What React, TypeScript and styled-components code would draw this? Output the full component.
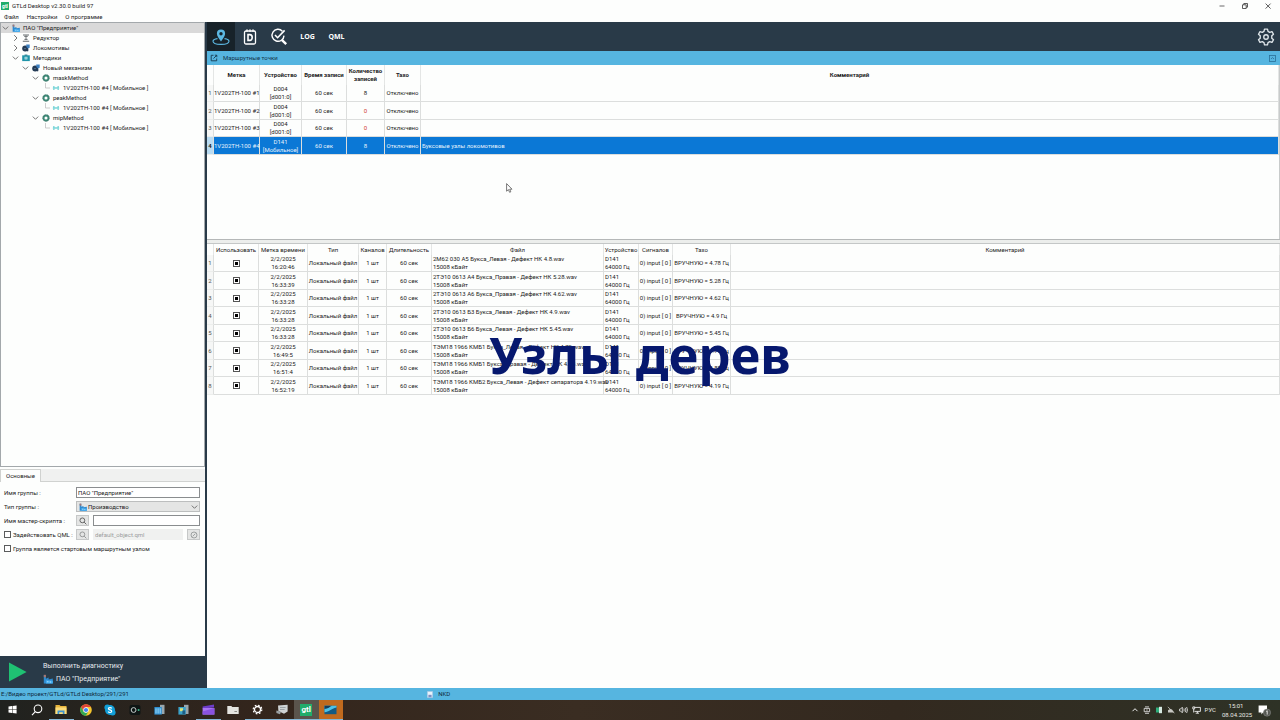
import React from "react";
import styled, { createGlobalStyle, css } from "styled-components";

const Global = createGlobalStyle`
  * { box-sizing: border-box; }
  html, body { margin: 0; height: 100%; }
  #root { height: 100%; }
  body, button, input, select {
    font-family: Roboto, "Open Sans", sans-serif;
    font-size: 6px;
    line-height: 8px;
    color: #1c1c1c;
  }
  button { border: 0; padding: 0; background: none; display: flex; align-items: center; justify-content: center; }
  svg { display: block; flex: none; }
`;

const Window = styled.div`
  display: flex;
  flex-direction: column;
  min-height: 100vh;
  background: #fdfefd;
  overflow: hidden;
`;

const TitleBar = styled.header`
  display: flex;
  align-items: center;
  gap: 3px;
  height: 12px;
  padding: 0 8px 0 1px;
`;
const AppBadge = styled.span<{ $size: number }>`
  display: flex;
  align-items: center;
  justify-content: center;
  width: ${(p) => p.$size}px;
  height: ${(p) => p.$size}px;
  background: #21ad6b;
  color: #fff;
  font-weight: 700;
  font-size: ${(p) => (p.$size > 8 ? 8 : 5)}px;
`;
const Title = styled.h1`
  flex: 1;
  margin: 0;
  font-size: 6px;
  font-weight: 400;
`;
const WindowButtons = styled.div`
  display: flex;
  gap: 15px;
`;
const MenuBar = styled.nav`
  display: flex;
  gap: 8px;
  height: 10px;
  padding: 0 4px;
  align-items: center;
`;

const Main = styled.div`
  flex: 1;
  display: flex;
  min-height: 0;
`;
const Side = styled.aside`
  display: flex;
  flex-direction: column;
  width: 205px;
  flex: none;
`;
const Tree = styled.ul`
  flex: 1;
  margin: 0;
  padding: 0;
  list-style: none;
  border: 1px solid #a3a8ab;
`;
const TreeRow = styled.li<{ $depth: number; $selected?: boolean }>`
  display: flex;
  align-items: center;
  height: 10px;
  padding-left: ${(p) => p.$depth * 10}px;
  background: ${(p) => (p.$selected ? "#d9d9d9" : "transparent")};
  white-space: nowrap;
`;
const TreeIcon = styled.span`
  display: flex;
  width: 13px;
  padding-left: 2px;
`;

const TabStrip = styled.div`
  display: flex;
  margin-top: 2px;
  height: 13px;
  background: #f0f1f0;
  border-bottom: 1px solid #d0d2d0;
`;
const Tab = styled.button`
  width: 41px;
  height: 13px;
  background: #fdfefd;
  border: 1px solid #d0d2d0;
  border-bottom: 0;
`;
const Form = styled.form`
  display: flex;
  flex-direction: column;
  gap: 3px;
  height: 174px;
  padding: 5px 5px 0 4px;
`;
const Field = styled.div`
  display: flex;
  align-items: center;
  height: 11px;
  gap: 4px;
`;
const FieldLabel = styled.label`
  width: 68px;
  white-space: nowrap;
`;
const CheckLabel = styled.label`
  display: flex;
  align-items: center;
  gap: 2px;
  width: 68px;
  white-space: nowrap;
`;
const TextInput = styled.input`
  flex: 1;
  min-width: 0;
  height: 11px;
  padding: 0 1px;
  border: 1px solid #8a8d8f;
  background: #fff;
  &:disabled {
    border-color: #f0f1f0;
    background: #f0f1f0;
    color: #9a9c9c;
  }
`;
const SelectBox = styled.div`
  flex: 1;
  display: flex;
  align-items: center;
  gap: 1px;
  height: 11px;
  padding: 0 0 0 2px;
  border: 1px solid #bcbebe;
  background: #e4e5e4;
`;
const Select = styled.select`
  flex: 1;
  appearance: none;
  border: 0;
  padding: 0;
  background: transparent;
`;
const ToolButton = styled.button`
  width: 13px;
  height: 11px;
  flex: none;
  border: 1px solid #c6c8c8;
  background: #e4e5e4;
`;
const Check = styled.input`
  appearance: none;
  width: 7px;
  height: 7px;
  margin: 0;
  flex: none;
  border: 1px solid #5a5c5c;
  background: #fff;
`;

const RunPanel = styled.button`
  height: 32px;
  justify-content: flex-start;
  gap: 16px;
  padding-left: 9px;
  background: #293a48;
  color: #e6ebee;
  font-size: 7px;
  text-align: left;
`;
const RunText = styled.span`
  display: flex;
  flex-direction: column;
  gap: 4px;
  padding-top: 1px;
`;
const RunTarget = styled.span`
  display: flex;
  align-items: center;
  gap: 3px;
`;

const Content = styled.main`
  flex: 1;
  display: flex;
  flex-direction: column;
  min-width: 0;
  border-left: 2px solid #293a48;
`;
const Toolbar = styled.div`
  display: flex;
  align-items: center;
  height: 29px;
  background: #293a48;
`;
const ToolbarButton = styled.button<{ $active?: boolean }>`
  width: ${(p) => (p.$active ? 28 : 29)}px;
  height: 29px;
  background: ${(p) => (p.$active ? "#172229" : "transparent")};
  color: #fff;
  font-family: "Open Sans", sans-serif;
  font-weight: 700;
  font-size: 7px;
`;
const Spacer = styled.span`
  flex: 1;
`;
const PanelHeader = styled.div`
  display: flex;
  align-items: center;
  gap: 5px;
  height: 14px;
  padding: 0 4px 0 3px;
  background: #56b5e0;
  color: #14344a;
`;
const PanelTitle = styled.h2`
  flex: 1;
  margin: 0;
  font-size: 6px;
  font-weight: 400;
`;
const RoutePane = styled.section`
  height: 174px;
  flex: none;
  border-right: 1px solid #c8cbcb;
`;
const Splitter = styled.hr`
  margin: 0;
  height: 5px;
  border: 0;
  border-top: 1px solid #b5b8b8;
  border-bottom: 1px solid #c4c7c7;
  background: #eceeec;
`;
const RecordPane = styled.section`
  flex: 1;
`;

const Table = styled.table`
  width: 100%;
  table-layout: fixed;
  border-collapse: separate;
  border-spacing: 0;
`;
const HeadCell = styled.th<{ $bold?: boolean }>`
  height: ${(p) => (p.$bold ? 20 : 11)}px;
  padding: 0;
  font-weight: ${(p) => (p.$bold ? 700 : 400)};
  border-right: 1px solid #e4e6e5;
  white-space: pre;
`;
const cell = css`
  padding: 0;
  border-right: 1px solid #dcdedd;
  border-bottom: 1px solid #dcdedd;
  white-space: pre;
`;
const Cell = styled.td<{ $left?: boolean; $red?: boolean }>`
  ${cell}
  text-align: ${(p) => (p.$left ? "left" : "center")};
  padding-left: ${(p) => (p.$left ? 1 : 0)}px;
  color: ${(p) => (p.$red ? "#d23b32" : "inherit")};
`;
const RowHead = styled.th<{ $selected?: boolean }>`
  ${cell}
  border-bottom-color: #eceeec;
  font-weight: ${(p) => (p.$selected ? 700 : 400)};
  background: ${(p) => (p.$selected ? "#b9dcf3" : "#f6f7f6")};
  color: ${(p) => (p.$selected ? "#1c1c1c" : "#555")};
`;
const Row = styled.tr<{ $selected?: boolean }>`
  height: 17px;
  &:nth-child(even) {
    height: 18px;
  }
  background: ${(p) => (p.$selected ? "#0b78d6" : "transparent")};
  color: ${(p) => (p.$selected ? "#e6f2fc" : "inherit")};
`;
const UseCheck = styled.input`
  appearance: none;
  display: block;
  width: 7px;
  height: 7px;
  margin: 0 auto;
  border: 1px solid #555;
  background: #fff;
  &:checked {
    background: #000;
    box-shadow: inset 0 0 0 1px #fff;
  }
`;

const Caption = styled.div`
  position: absolute;
  top: 319px;
  left: 0;
  right: 0;
  text-align: center;
  font-family: "Noto Sans", "Open Sans", sans-serif;
  font-size: 51px;
  line-height: 70px;
  font-weight: 700;
  color: #06186e;
  pointer-events: none;
`;
const Pointer = styled.span`
  position: absolute;
  top: 183px;
  left: 506px;
`;

const StatusBar = styled.footer`
  display: grid;
  grid-template-columns: 1fr 2fr;
  align-items: center;
  height: 12px;
  padding-left: 1px;
  background: #56b5e0;
  color: #10283a;
`;
const StatusUser = styled.span`
  display: flex;
  align-items: center;
  gap: 5px;
`;
const Taskbar = styled.div`
  display: flex;
  align-items: center;
  justify-content: space-between;
  height: 20px;
  background: linear-gradient(90deg, #20221f 0%, #33251c 20%, #3a2d22 45%, #33291f 70%, #2e3226 100%);
  color: #fff;
`;
const Apps = styled.div`
  display: grid;
  grid-template-columns: repeat(14, 1fr);
  width: 343px;
`;
const AppButton = styled.button<{ $open?: boolean; $bg?: string }>`
  height: 20px;
  background: ${(p) => p.$bg || "transparent"};
  border-bottom: 1px solid ${(p) => (p.$open ? "#86b8d8" : "transparent")};
`;
const Tray = styled.div`
  display: flex;
  align-items: center;
  gap: 4px;
  padding-right: 9px;
  color: #e8e8e4;
`;
const Clock = styled.time`
  width: 28px;
  margin: 0 4px 0 2px;
  text-align: center;
  line-height: 9px;
`;

const Chevron = ({ open }: { open: boolean }) => (
  <svg width="9" height="8" viewBox="0 0 9 8" fill="none" stroke="#666" strokeWidth="0.9">
    <path d={open ? "M1.8 2.6 4.5 5.3 7.2 2.6" : "M3.2 1.2 6 4 3.2 6.8"} />
  </svg>
);
const Branch = () => (
  <svg width="9" height="10" viewBox="0 0 9 10" fill="none" stroke="#b8b8b8" strokeWidth="0.7">
    <path d="M4.5 0V5H9" />
  </svg>
);
const Factory = ({ size = 8 }: { size?: number }) => (
  <svg width={size} height={size} viewBox="0 0 10 10">
    <path d="M.8 9.600V1H2.900V4.800L5.600 3.600V5.400L9.800 4.600V9.600Z" fill="#2f8bd0" />
    <path d="M.8.8H2.900V3.200H.8Z" fill="#a9756e" />
    <path d="M2.900 9.600V6.200L9.800 6.800V9.600Z" fill="#45aef0" />
    <path d="M4.300 7.200h1v1.100h-1ZM6.800 7.400h1v1h-1Z" fill="#d6effc" />
  </svg>
);
const Reducer = () => (
  <svg width="8" height="8" viewBox="0 0 8 8" fill="none" stroke="#666b6e">
    <path d="M1 1h6M.8 7.200h6.400" strokeWidth="1.1" />
    <path d="M2.200 2.400h3.600M4 1.500V6M2.400 5.400h3.200" strokeWidth=".9" />
  </svg>
);
const Loco = () => (
  <svg width="8" height="8" viewBox="0 0 8 8">
    <circle cx="3.200" cy="4.500" r="3" fill="#243b55" />
    <circle cx="3" cy="4.600" r=".7" fill="#7d94ac" />
    <path d="M4.200.4h3.500v3.400L6 4.600 4.400 3Z" fill="#3c7fc0" />
    <path d="M4 6.800 6.800 5.200 6 7.600Z" fill="#243b55" />
  </svg>
);
const Book = () => (
  <svg width="8" height="8" viewBox="0 0 8 8">
    <path d="M.2 1.300h7.600v5.800H.2Z" fill="#1f94a8" />
    <path d="M2.600.6h2.800v1H2.600Z" fill="#166c80" />
    <path d="M2.600 2.800h2.800v2.600H2.600Z" fill="#c8f0f4" />
    <path d="M3.500 3.600h1v1h-1Z" fill="#166c80" />
  </svg>
);
const Ring = () => (
  <svg width="8" height="8" viewBox="0 0 8 8">
    <circle cx="4" cy="4" r="2.5" fill="none" stroke="#3f8a78" strokeWidth="1.9" />
    <circle cx="4" cy="4" r="3.300" fill="none" stroke="#3a6a60" strokeWidth=".6" strokeDasharray="1 .8" />
  </svg>
);
const Sensor = () => (
  <svg width="8" height="8" viewBox="0 0 8 8">
    <path d="M1 2.200h1.600v1h2.800v-1h1.600v3.600H5.400v-1H2.600v1H1Z" fill="#6ccfd2" />
    <path d="M.6 3.700h6.800v.8H.6Z" fill="#a8e6e8" />
  </svg>
);
const Magnifier = ({ color = "#555", size = 8 }: { color?: string; size?: number }) => (
  <svg width={size} height={size} viewBox="0 0 10 10" fill="none" stroke={color} strokeWidth="1.1">
    <circle cx="4.200" cy="4.200" r="3" />
    <path d="M6.400 6.400 9.200 9.200" />
  </svg>
);
const Save = () => (
  <svg width="6" height="7" viewBox="0 0 6 7">
    <path d="M.4.5h5.200v6H.4Z" fill="#e9f3fb" stroke="#a9c4e4" strokeWidth=".6" />
    <path d="M1.400 3.800h3.200v2.400H1.400Z" fill="#7c8fc4" />
  </svg>
);

type Node = { depth: number; text: string; icon: React.ReactNode; open?: boolean; leaf?: boolean };
const tree: Node[] = [
  { depth: 0, text: 'ПАО "Предприятие"', icon: <Factory />, open: true },
  { depth: 1, text: "Редуктор", icon: <Reducer /> },
  { depth: 1, text: "Локомотивы", icon: <Loco /> },
  { depth: 1, text: "Методики", icon: <Book />, open: true },
  { depth: 2, text: "Новый механизм", icon: <Loco />, open: true },
  { depth: 3, text: "maskMethod", icon: <Ring />, open: true },
  { depth: 4, text: "1V202TH-100 #4 [ Мобильное ]", icon: <Sensor />, leaf: true },
  { depth: 3, text: "peakMethod", icon: <Ring />, open: true },
  { depth: 4, text: "1V202TH-100 #4 [ Мобильное ]", icon: <Sensor />, leaf: true },
  { depth: 3, text: "mipMethod", icon: <Ring />, open: true },
  { depth: 4, text: "1V202TH-100 #4 [ Мобильное ]", icon: <Sensor />, leaf: true },
];

const routeColumns = [
  { name: "", width: 7 },
  { name: "Метка", width: 46 },
  { name: "Устройство", width: 42 },
  { name: "Время записи", width: 45 },
  { name: "Количество\nзаписей", width: 38 },
  { name: "Тахо", width: 36 },
  { name: "Комментарий" },
];
const routes = [
  { device: "D004\n[d001:0]", count: 8, note: "" },
  { device: "D004\n[d001:0]", count: 0, note: "" },
  { device: "D004\n[d001:0]", count: 0, note: "" },
  { device: "D141\n[Мобильное]", count: 8, note: "Буксовые узлы локомотивов" },
];
const selectedRoute = 3;

const recordColumns = [
  { name: "", width: 7 },
  { name: "Использовать", width: 45 },
  { name: "Метка времени", width: 49 },
  { name: "Тип", width: 51 },
  { name: "Каналов", width: 28 },
  { name: "Длительность", width: 45 },
  { name: "Файл", width: 172 },
  { name: "Устройство", width: 35 },
  { name: "Сигналов", width: 34 },
  { name: "Тахо", width: 58 },
  { name: "Комментарий" },
];
const records = [
  { time: "16:20:46", file: "2М62 030 А5 Букса_Левая - Дефект НК 4.8.wav", rate: "4.78" },
  { time: "16:33:39", file: "2ТЭ10 0613 А4 Букса_Правая - Дефект НК 5.28.wav", rate: "5.28" },
  { time: "16:33:28", file: "2ТЭ10 0613 А6 Букса_Правая - Дефект НК 4.62.wav", rate: "4.62" },
  { time: "16:33:28", file: "2ТЭ10 0613 Б3 Букса_Левая - Дефект НК 4.9.wav", rate: "4.9" },
  { time: "16:33:28", file: "2ТЭ10 0613 Б6 Букса_Левая - Дефект НК 5.45.wav", rate: "5.45" },
  { time: "16:49:5", file: "ТЭМ18 1966 КМБ1 Букса_Левая - Дефект НК 4.79.wav", rate: "4.79" },
  { time: "16:51:4", file: "ТЭМ18 1966 КМБ1 Букса_Правая - Дефект НК 4.88.wav", rate: "4.88" },
  { time: "16:52:19", file: "ТЭМ18 1966 КМБ2 Букса_Левая - Дефект сепаратора 4.19.wav", rate: "4.19" },
];

const Columns = ({ list }: { list: { name: string; width?: number }[] }) => (
  <colgroup>
    {list.map((c, i) => (
      <col key={i} width={c.width} />
    ))}
  </colgroup>
);

const apps: { name: string; open?: boolean; bg?: string; icon: React.ReactNode }[] = [
  {
    name: "Пуск",
    icon: (
      <svg width="9" height="9" viewBox="0 0 9 9" fill="#fff">
        <path d="M.5 1.6 4 1.1V4.2H.5ZM4.5 1 8.6.5V4.2H4.5ZM.5 4.8H4V7.9L.5 7.4ZM4.5 4.8H8.6V8.5L4.5 8Z" />
      </svg>
    ),
  },
  {
    name: "Поиск",
    icon: (
      <svg width="12" height="12" viewBox="0 0 12 12" fill="none" stroke="#fff" strokeWidth="1.1">
        <circle cx="7" cy="4.8" r="3.8" />
        <path d="M4.3 7.6 1 11.2" />
      </svg>
    ),
  },
  {
    name: "Проводник",
    open: true,
    icon: (
      <svg width="12" height="11" viewBox="0 0 12 11">
        <path d="M.5 1h4l1 1H11.5V10H.5Z" fill="#e8b53c" />
        <path d="M.5 3.4h11V10H.5Z" fill="#fbdc7b" />
        <path d="M2.5 6.4h7V10H7.8V8.2H4.2V10H2.5Z" fill="#3d92d0" />
      </svg>
    ),
  },
  {
    name: "Chrome",
    icon: (
      <svg width="12" height="12" viewBox="0 0 12 12">
        <circle cx="6" cy="6" r="5.8" fill="#f6c52c" />
        <path d="M1 3A5.8 5.8 0 0 1 11 3.1H6L3.6 7.3Z" fill="#e0453a" />
        <path d="M1 3A5.8 5.8 0 0 0 5.8 11.8L8.4 7.4 6 8.8 3.5 7.4Z" fill="#34a853" />
        <circle cx="6" cy="6" r="2.7" fill="#fff" />
        <circle cx="6" cy="6" r="2.1" fill="#4285f4" />
      </svg>
    ),
  },
  {
    name: "Skype",
    icon: (
      <svg width="12" height="12" viewBox="0 0 12 12">
        <circle cx="6" cy="6" r="5" fill="#129fd8" />
        <circle cx="3.4" cy="3.4" r="3" fill="#129fd8" />
        <circle cx="8.6" cy="8.6" r="3" fill="#129fd8" />
        <path d="M7.8 4.3C6.900 3.200 4.300 3.300 4.400 4.700 4.500 6.100 7.700 5.700 7.700 7.300 7.700 8.800 5 8.900 4.100 7.600" fill="none" stroke="#fff" strokeWidth="1.2" />
      </svg>
    ),
  },
  {
    name: "Камера",
    icon: (
      <svg width="12" height="12" viewBox="0 0 12 12">
        <rect x=".5" y="1" width="11" height="10" rx="2" fill="#0e1514" />
        <circle cx="4.6" cy="6" r="2.4" fill="none" stroke="#c3cccb" strokeWidth="1" />
        <circle cx="9.6" cy="6" r="1" fill="#39b98a" />
      </svg>
    ),
  },
  {
    name: "Монитор",
    icon: (
      <svg width="11" height="12" viewBox="0 0 11 12">
        <path d="M6 .8h4.500V10H6Z" fill="#9aa7ad" />
        <path d="M.4 3h7.400v7.600H.4Z" fill="#2d8ed0" />
        <path d="M1.400 4.200h1.200v5.400H1.400ZM3.500 4.200h1.200v5.400H3.500ZM5.600 4.200h1.200v5.400H5.600Z" fill="#8fd0f2" />
      </svg>
    ),
  },
  {
    name: "Сервер",
    icon: (
      <svg width="11" height="12" viewBox="0 0 11 12">
        <path d="M6 .8h4.500V10H6Z" fill="#9aa7ad" />
        <path d="M.4 3h7.400v7.600H.4Z" fill="#3aa1c9" />
        <path d="M2 4.200h3v3H2Z" fill="#d8e37a" />
        <path d="M4.400 6.400h2.800v3.600H4.400Z" fill="#1d5e86" />
      </svg>
    ),
  },
  {
    name: "Видео",
    open: true,
    icon: (
      <svg width="13" height="11" viewBox="0 0 13 11">
        <path d="M.6 2.600 12 .4V3.400L.6 4.600Z" fill="#6d3cc8" />
        <path d="M.6 4H12.400V10.600H.6Z" fill="#a875f2" />
        <path d="M.6 7.600 12.400 4V10.600H.6Z" fill="#8a52e0" />
      </svg>
    ),
  },
  {
    name: "Диск",
    icon: (
      <svg width="12" height="10" viewBox="0 0 12 10">
        <path d="M.3 1h4l1 1h6.400V9H.3Z" fill="#e4e4e0" />
        <path d="M7.400 6h2.600v1H7.400Z" fill="#8a8a86" />
      </svg>
    ),
  },
  {
    name: "Параметры",
    open: true,
    icon: (
      <svg width="11" height="11" viewBox="0 0 11 11" fill="none" stroke="#fff">
        <circle cx="5.500" cy="5.500" r="3" strokeWidth="1.300" />
        <circle cx="5.500" cy="5.500" r="4.300" strokeWidth="1.200" strokeDasharray="1.700 1.677" />
      </svg>
    ),
  },
  {
    name: "Редактор",
    open: true,
    icon: (
      <svg width="12" height="11" viewBox="0 0 12 11">
        <path d="M2 1.500 11.600.8V7.400L8 9.800 2.400 7Z" fill="#cfd3d4" />
        <path d="M.4 6.600 5 7.800 4 10.200.4 9Z" fill="#9ba1a4" />
        <path d="M4 3h5.600v1H4ZM4 5h4.600v1H4Z" fill="#9ba1a4" />
      </svg>
    ),
  },
  { name: "GTLd", open: true, bg: "#5a544c", icon: <AppBadge $size={12}>gtl</AppBadge> },
  {
    name: "Просмотр",
    open: true,
    bg: "#c06a1e",
    icon: (
      <svg width="13" height="10" viewBox="0 0 13 10">
        <path d="M.5.8h12v8.400H.5Z" fill="#135a82" />
        <path d="M.5 7.200C5 6.800 7 3.600 12.500 2.400V.8H.5Z" fill="#4cc3e8" />
        <path d="M.5 4C4 4 6 1.600 8 .8H.5Z" fill="#1a3c58" />
      </svg>
    ),
  },
];

export default function App() {
  return (
    <Window>
      <Global />
      <TitleBar>
        <AppBadge $size={8}>gtl</AppBadge>
        <Title>GTLd Desktop v2.30.0 build 97</Title>
        <WindowButtons>
          <button aria-label="Свернуть">
            <svg width="8" height="8" viewBox="0 0 8 8" stroke="#444" strokeWidth=".8"><path d="M1.500 4h5" /></svg>
          </button>
          <button aria-label="Развернуть">
            <svg width="8" height="8" viewBox="0 0 8 8" fill="none" stroke="#333" strokeWidth=".8"><path d="M1.500 2.800h3.700v3.700H1.500ZM2.800 2.800V1.500h3.700v3.700H5.200" /></svg>
          </button>
          <button aria-label="Закрыть">
            <svg width="8" height="8" viewBox="0 0 8 8" stroke="#333" strokeWidth=".8"><path d="M1.600 1.600l5 5M6.600 1.600l-5 5" /></svg>
          </button>
        </WindowButtons>
      </TitleBar>
      <MenuBar>
        <button>Файл</button>
        <button>Настройки</button>
        <button>О программе</button>
      </MenuBar>
      <Main>
        <Side>
          <Tree>
            {tree.map((n, i) => (
              <TreeRow key={i} $depth={n.depth} $selected={i === 0}>
                {n.leaf ? <Branch /> : <Chevron open={!!n.open} />}
                <TreeIcon>{n.icon}</TreeIcon>
                {n.text}
              </TreeRow>
            ))}
          </Tree>
          <TabStrip>
            <Tab>Основные</Tab>
          </TabStrip>
          <Form>
            <Field>
              <FieldLabel htmlFor="group-name">Имя группы :</FieldLabel>
              <TextInput id="group-name" defaultValue='ПАО "Предприятие"' />
            </Field>
            <Field>
              <FieldLabel htmlFor="group-type">Тип группы :</FieldLabel>
              <SelectBox>
                <Factory />
                <Select id="group-type">
                  <option>Производство</option>
                </Select>
                <Chevron open />
              </SelectBox>
            </Field>
            <Field>
              <FieldLabel htmlFor="script">Имя мастер-скрипта :</FieldLabel>
              <ToolButton type="button" aria-label="Найти скрипт"><Magnifier /></ToolButton>
              <TextInput id="script" />
            </Field>
            <Field>
              <CheckLabel>
                <Check type="checkbox" />
                Задействовать QML :
              </CheckLabel>
              <ToolButton type="button" disabled aria-label="Найти QML"><Magnifier color="#8d9090" /></ToolButton>
              <TextInput aria-label="Файл QML" disabled defaultValue="default_object.qml" />
              <ToolButton type="button" disabled aria-label="Очистить">
                <svg width="8" height="8" viewBox="0 0 8 8" fill="none" stroke="#8d9090" strokeWidth=".8"><circle cx="4" cy="4" r="3" /><path d="M2.600 5.400 5.400 2.600" /></svg>
              </ToolButton>
            </Field>
            <Field>
              <CheckLabel>
                <Check type="checkbox" />
                Группа является стартовым маршрутным узлом
              </CheckLabel>
            </Field>
          </Form>
          <RunPanel>
            <svg width="18" height="20" viewBox="0 0 18 20"><path d="M0 .6 17.600 10 0 19.400Z" fill="#1fc173" /></svg>
            <RunText>
              <span>Выполнить диагностику</span>
              <RunTarget>
                <Factory size={10} />
                ПАО "Предприятие"
              </RunTarget>
            </RunText>
          </RunPanel>
        </Side>
        <Content>
          <Toolbar>
            <ToolbarButton $active aria-label="Маршрут">
              <svg width="18" height="18" viewBox="0 0 18 18" fill="none" stroke="#5cb8e2">
                <path d="M5.500 10.600C2.800 11 1 12 1 13.300 1 15.200 4.600 16.400 9 16.400S17 15.200 17 13.300C17 12 15.200 11 12.500 10.600" strokeWidth="1.100" />
                <path d="M9 13.600C7.600 11 4.900 8.300 4.900 5.700A4.100 4.100 0 0 1 13.100 5.700C13.100 8.300 10.400 11 9 13.600ZM9 4A1.700 1.700 0 1 0 9 7.400 1.700 1.700 0 1 0 9 4Z" fill="#5cb8e2" fillRule="evenodd" stroke="none" />
              </svg>
            </ToolbarButton>
            <ToolbarButton aria-label="Документ">
              <svg width="14" height="18" viewBox="0 0 14 18" fill="none" stroke="#fff" strokeWidth="1.300">
                <rect x="1.500" y="3" width="11" height="13" rx="1.500" />
                <path d="M4 1.200V4M7 1.200V4M10 1.200V4" strokeWidth="1.100" />
                <path d="M5 6.600H6.800C10 6.600 10 12.400 6.800 12.400H5Z" strokeWidth="1.600" />
              </svg>
            </ToolbarButton>
            <ToolbarButton aria-label="Проверка">
              <svg width="18" height="18" viewBox="0 0 18 18" fill="none" stroke="#fff">
                <path d="M12.400 3.200A6 6 0 1 0 14 7.600" strokeWidth="1.400" />
                <path d="M5 7 7.600 9.700 14.600 2.400" strokeWidth="1.600" />
                <path d="M11.800 11.800 16.200 16.200" strokeWidth="2.400" />
              </svg>
            </ToolbarButton>
            <ToolbarButton>LOG</ToolbarButton>
            <ToolbarButton>QML</ToolbarButton>
            <Spacer />
            <ToolbarButton aria-label="Настройки программы">
              <svg width="18" height="18" viewBox="0 0 24 24" fill="none" stroke="#dfe6ea" strokeWidth="1.800" strokeLinejoin="round">
                <path d="M10 1.500h4l.7 3 2.300 1.300 3-1 2 3.500-2.300 2.100v3.200l2.300 2.100-2 3.500-3-1-2.300 1.300-.7 3h-4l-.7-3L7 18.200l-3 1-2-3.500 2.300-2.100v-3.200L2 8.300l2-3.500 3 1 2.300-1.300Z" />
                <circle cx="12" cy="12" r="3" />
              </svg>
            </ToolbarButton>
          </Toolbar>
          <PanelHeader>
            <svg width="8" height="8" viewBox="0 0 8 8" fill="none" stroke="#173a50" strokeWidth=".9"><path d="M3.500 1.300H1.200V6.800H6.700V4.500M4.800 1.200h2v2M6.800 1.200 3.500 4.500" /></svg>
            <PanelTitle>Маршрутные точки</PanelTitle>
            <button aria-label="Свернуть панель">
              <svg width="7" height="7" viewBox="0 0 7 7" fill="none" stroke="#2a6f98" strokeWidth=".8"><rect x=".5" y=".5" width="6" height="6" /><path d="M2 4 3.500 2.600 5 4" /></svg>
            </button>
          </PanelHeader>
          <RoutePane>
            <Table>
              <Columns list={routeColumns} />
              <thead>
                <tr>
                  {routeColumns.map((c, i) => (
                    <HeadCell key={i} $bold>{c.name}</HeadCell>
                  ))}
                </tr>
              </thead>
              <tbody>
                {routes.map((r, i) => (
                  <Row key={i} $selected={i === selectedRoute}>
                    <RowHead scope="row" $selected={i === selectedRoute}>{i + 1}</RowHead>
                    <Cell>{`1V202TH-100 #${i + 1}`}</Cell>
                    <Cell>{r.device}</Cell>
                    <Cell>60 сек</Cell>
                    <Cell $red={r.count === 0}>{r.count}</Cell>
                    <Cell>Отключено</Cell>
                    <Cell $left>{r.note}</Cell>
                  </Row>
                ))}
              </tbody>
            </Table>
          </RoutePane>
          <Splitter />
          <RecordPane>
            <Table>
              <Columns list={recordColumns} />
              <thead>
                <tr>
                  {recordColumns.map((c, i) => (
                    <HeadCell key={i}>{c.name}</HeadCell>
                  ))}
                </tr>
              </thead>
              <tbody>
                {records.map((r, i) => (
                  <Row key={i}>
                    <RowHead scope="row">{i + 1}</RowHead>
                    <Cell><UseCheck type="checkbox" defaultChecked aria-label="Использовать" /></Cell>
                    <Cell>{`2/2/2025\n${r.time}`}</Cell>
                    <Cell>Локальный файл</Cell>
                    <Cell>1 шт</Cell>
                    <Cell>60 сек</Cell>
                    <Cell $left>{`${r.file}\n15008 кБайт`}</Cell>
                    <Cell $left>{"D141\n64000 Гц"}</Cell>
                    <Cell>{"0) input [ 0 ]"}</Cell>
                    <Cell>{`ВРУЧНУЮ = ${r.rate} Гц`}</Cell>
                    <Cell />
                  </Row>
                ))}
              </tbody>
            </Table>
          </RecordPane>
        </Content>
      </Main>
      <StatusBar>
        <span>E:/Видео проект/GTLd/GTLd Desktop/291/291</span>
        <StatusUser><Save />NKD</StatusUser>
      </StatusBar>
      <Taskbar>
        <Apps>
          {apps.map((a) => (
            <AppButton key={a.name} aria-label={a.name} $open={a.open} $bg={a.bg}>{a.icon}</AppButton>
          ))}
        </Apps>
        <Tray>
          <svg width="8" height="8" viewBox="0 0 8 8" fill="none" stroke="#eee"><path d="M1.500 5.200 4 2.700 6.500 5.200" /></svg>
          <svg width="8" height="8" viewBox="0 0 8 8" fill="none" stroke="#ddd" strokeWidth=".9"><path d="M2 .9h4M2 7.300h4M1.200 2.400h5.400v3.300H1.200ZM3.200 4h1.500" /></svg>
          <svg width="8" height="8" viewBox="0 0 8 8"><path d="M1 1.500h3v5H1Z" fill="#2fae7b" /><path d="M4 .8h3v6.400H4Z" fill="#d6e8e0" /></svg>
          <svg width="8" height="8" viewBox="0 0 8 8" fill="#c9c9c4"><path d="M1 6.500V4.200L3 3l2 .6 2 2.900Z" /><path d="M.8.900 7.400 7" stroke="#c9c9c4" strokeWidth=".8" /></svg>
          <svg width="9" height="8" viewBox="0 0 9 8" fill="none" stroke="#eee" strokeWidth=".8"><path d="M.6 3h1L3.300 1.200V6.800L1.600 5h-1ZM4.800 2.600Q5.600 4 4.800 5.400M6.200 1.800Q7.600 4 6.200 6.200M7.600 1Q9.400 4 7.600 7" /></svg>
          <svg width="9" height="8" viewBox="0 0 9 8" fill="none" stroke="#eee" strokeWidth=".9"><path d="M2.500 1.400H8.400V5.400H2.500M5.400 5.400V7.200M3.700 7.200H7M.8.900h1.900v2H.8ZM1.700 2.900V6.500" /></svg>
          <span>РУС</span>
          <Clock>15:01<br />08.04.2025</Clock>
          <svg width="13" height="13" viewBox="0 0 13 13"><path d="M.6 1.500h8.400v7H5L3.400 10.400V8.500H.6Z" fill="#fff" /><circle cx="9" cy="8.600" r="3.600" fill="#555852" stroke="#999" strokeWidth=".5" /><path d="M8.200 7.500 9.200 6.700V10.600" fill="none" stroke="#fff" strokeWidth=".8" /></svg>
        </Tray>
      </Taskbar>
      <Pointer>
        <svg width="7" height="10" viewBox="0 0 7 10" fill="#fff" stroke="#555" strokeWidth=".8"><path d="M.6.6V8.200L2.400 6.600 3.600 9.300 4.800 8.800 3.700 6.200H6Z" /></svg>
      </Pointer>
      <Caption>Узлы дерев</Caption>
    </Window>
  );
}
